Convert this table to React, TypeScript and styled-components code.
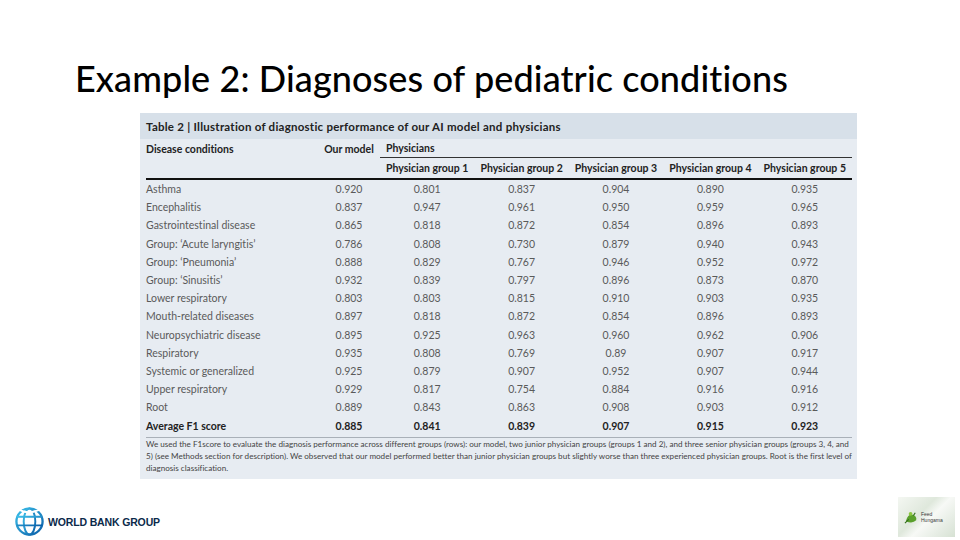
import React from "react";
import styled, { createGlobalStyle } from "styled-components";

const GlobalStyle = createGlobalStyle`
  html, body {
    margin: 0;
    padding: 0;
    background: #ffffff;
  }
`;

type Row = { name: string; values: string[]; bold?: boolean };

const rows: Row[] = [
  { name: "Asthma", values: ["0.920", "0.801", "0.837", "0.904", "0.890", "0.935"] },
  { name: "Encephalitis", values: ["0.837", "0.947", "0.961", "0.950", "0.959", "0.965"] },
  { name: "Gastrointestinal disease", values: ["0.865", "0.818", "0.872", "0.854", "0.896", "0.893"] },
  { name: "Group: ‘Acute laryngitis’", values: ["0.786", "0.808", "0.730", "0.879", "0.940", "0.943"] },
  { name: "Group: ‘Pneumonia’", values: ["0.888", "0.829", "0.767", "0.946", "0.952", "0.972"] },
  { name: "Group: ‘Sinusitis’", values: ["0.932", "0.839", "0.797", "0.896", "0.873", "0.870"] },
  { name: "Lower respiratory", values: ["0.803", "0.803", "0.815", "0.910", "0.903", "0.935"] },
  { name: "Mouth-related diseases", values: ["0.897", "0.818", "0.872", "0.854", "0.896", "0.893"] },
  { name: "Neuropsychiatric disease", values: ["0.895", "0.925", "0.963", "0.960", "0.962", "0.906"] },
  { name: "Respiratory", values: ["0.935", "0.808", "0.769", "0.89", "0.907", "0.917"] },
  { name: "Systemic or generalized", values: ["0.925", "0.879", "0.907", "0.952", "0.907", "0.944"] },
  { name: "Upper respiratory", values: ["0.929", "0.817", "0.754", "0.884", "0.916", "0.916"] },
  { name: "Root", values: ["0.889", "0.843", "0.863", "0.908", "0.903", "0.912"] },
  { name: "Average F1 score", values: ["0.885", "0.841", "0.839", "0.907", "0.915", "0.923"], bold: true },
];

const groups = [1, 2, 3, 4, 5];

const App = () => {
  return (
    <>
      <GlobalStyle />
      <Page>
        <Title>Example 2: Diagnoses of pediatric conditions</Title>
        <TableCard>
          <Caption>
            Table 2 | Illustration of diagnostic performance of our AI model and physicians
          </Caption>
          <Grid>
            <HeadCell>Disease conditions</HeadCell>
            <HeadCell center>Our model</HeadCell>
            <SpanCell>Physicians</SpanCell>

            <SubHead />
            <SubHead />
            {groups.map((g) => (
              <SubHead key={g}>Physician group {g}</SubHead>
            ))}

            {rows.map((r) => (
              <React.Fragment key={r.name}>
                <Cell bold={r.bold} last={r.bold}>
                  {r.name}
                </Cell>
                {r.values.map((v, i) => (
                  <Cell key={i} center bold={r.bold} last={r.bold}>
                    {v}
                  </Cell>
                ))}
              </React.Fragment>
            ))}
          </Grid>
          <Note>
            We used the F1score to evaluate the diagnosis performance across different groups (rows): our
            model, two junior physician groups (groups 1 and 2), and three senior physician groups (groups 3, 4,
            and 5) (see Methods section for description). We observed that our model performed better than
            junior physician groups but slightly worse than three experienced physician groups. Root is the
            first level of diagnosis classification.
          </Note>
        </TableCard>
        <Footer>
          <WorldBank>
            <svg width="31" height="31" viewBox="0 0 32 32">
              <defs>
                <linearGradient id="wbg" x1="0" y1="0" x2="1" y2="1">
                  <stop offset="0" stopColor="#3cc0ea" />
                  <stop offset="1" stopColor="#0a5ea8" />
                </linearGradient>
              </defs>
              <circle cx="16" cy="16" r="13.5" fill="none" stroke="url(#wbg)" strokeWidth="2.4" />
              <ellipse cx="16" cy="16" rx="6" ry="13.5" fill="none" stroke="url(#wbg)" strokeWidth="2" />
              <path d="M3 11 H29 M2.6 20 H29.4" stroke="url(#wbg)" strokeWidth="2" fill="none" />
              <path d="M6 4 Q14 9 26 4" stroke="#ffffff" strokeWidth="2.2" fill="none" />
            </svg>
            <WorldBankText>WORLD BANK GROUP</WorldBankText>
          </WorldBank>
          <PartnerLogo>
            <svg width="15" height="15" viewBox="0 0 16 16">
              <path d="M2 12 Q4 4 9 5 Q14 6 13 11 Q9 15 2 12 Z" fill="#5aa02c" />
              <circle cx="7" cy="4" r="2" fill="#8cc63f" />
              <path d="M1 14 L5 10 M12 3 L10 6" stroke="#2f6d1a" strokeWidth="1.2" />
            </svg>
            <PartnerText>
              <span>Feed</span>
              <span>Hungama</span>
            </PartnerText>
          </PartnerLogo>
        </Footer>
      </Page>
    </>
  );
};

export default App;

const Page = styled.div`
  width: 960px;
  height: 540px;
  display: flex;
  flex-direction: column;
  overflow: hidden;
  font-variant-ligatures: none;
`;

const Title = styled.h1`
  margin: 0;
  padding: 55px 0 0 75px;
  font-family: Lato, "Open Sans", sans-serif;
  font-weight: 500;
  font-size: 36px;
  line-height: 47px;
  letter-spacing: 0.1px;
  color: #000000;
`;

const TableCard = styled.div`
  margin: 11px 0 0 140px;
  width: 717px;
  height: 366px;
  background: #e7ecf2;
  font-family: Lato, "Open Sans", sans-serif;
  display: flex;
  flex-direction: column;
`;

const Caption = styled.div`
  height: 26px;
  background: #d7e0e9;
  padding-left: 6px;
  display: flex;
  align-items: center;
  font-size: 11.5px;
  font-weight: 700;
  letter-spacing: 0.25px;
  color: #222;
`;

const Grid = styled.div`
  margin: 0 5px 0 6px;
  display: grid;
  grid-template-columns: 172px 62px repeat(5, 1fr);
`;

const HeadCell = styled.div<{ center?: boolean }>`
  height: 19px;
  display: flex;
  align-items: center;
  justify-content: ${(p) => (p.center ? "center" : "flex-start")};
  font-size: 10.5px;
  font-weight: 700;
  color: #222;
`;

const SpanCell = styled(HeadCell)`
  grid-column: 3 / span 5;
  padding-left: 6px;
  border-bottom: 1px solid #333;
  height: 18px;
`;

const SubHead = styled.div`
  height: 20px;
  display: flex;
  align-items: center;
  justify-content: center;
  font-size: 10.5px;
  font-weight: 700;
  color: #222;
  border-bottom: 2px solid #111;
  white-space: nowrap;
`;

const Cell = styled.div<{ center?: boolean; bold?: boolean; last?: boolean }>`
  height: 18.2px;
  display: flex;
  align-items: center;
  justify-content: ${(p) => (p.center ? "center" : "flex-start")};
  font-size: 10.5px;
  font-weight: ${(p) => (p.bold ? 700 : 400)};
  color: ${(p) => (p.bold ? "#222" : "#5a5a5a")};
  white-space: nowrap;
  ${(p) => (p.last ? "padding-bottom: 2px; border-bottom: 1px solid #a9b0b8;" : "")}
`;

const Note = styled.p`
  margin: 0;
  padding: 0 2px 0 6px;
  font-size: 8.1px;
  line-height: 12px;
  color: #444;
`;

const Footer = styled.div`
  margin-top: auto;
  padding: 0 5px 3px 14px;
  display: flex;
  justify-content: space-between;
  align-items: flex-end;
`;

const WorldBank = styled.div`
  display: flex;
  align-items: center;
  gap: 3px;
`;

const WorldBankText = styled.span`
  font-family: "Liberation Sans", Arial, sans-serif;
  font-weight: 700;
  font-size: 10.5px;
  letter-spacing: -0.15px;
  color: #0b2a4a;
`;

const PartnerLogo = styled.div`
  width: 57px;
  height: 40px;
  box-sizing: border-box;
  padding-left: 6px;
  display: flex;
  align-items: center;
  gap: 2px;
  background: linear-gradient(135deg, #f4f7f2 0%, #dfe8dc 40%, #f7f9f6 55%, #d6e1d3 100%);
`;

const PartnerText = styled.div`
  display: flex;
  flex-direction: column;
  font-family: "Liberation Sans", Arial, sans-serif;
  font-size: 5px;
  line-height: 6px;
  color: #3a3a3a;
`;
